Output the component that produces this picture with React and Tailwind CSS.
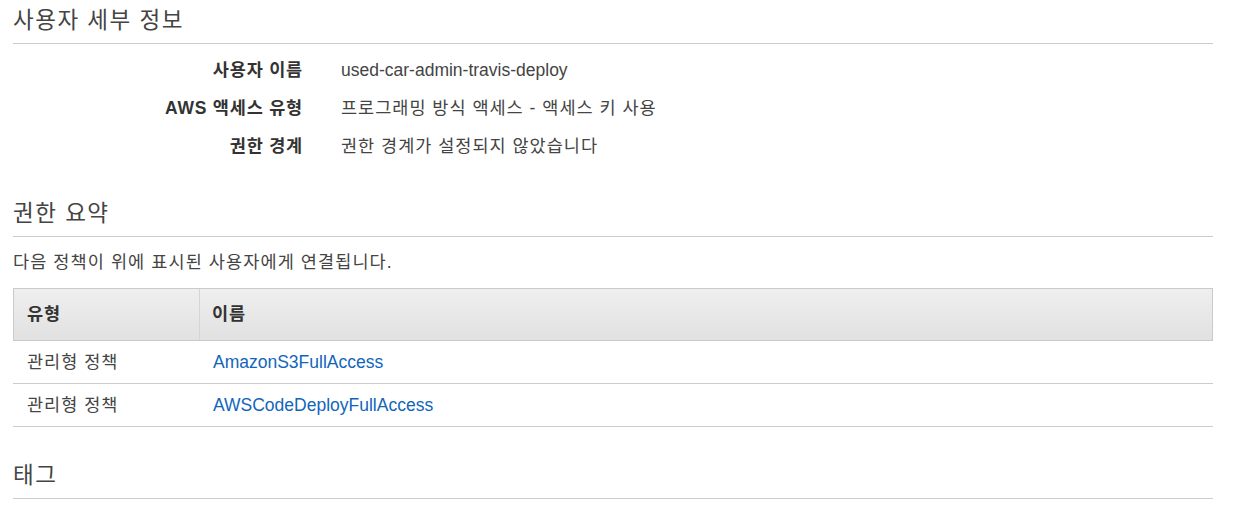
import React from "react";

const details = [
  { label: "사용자 이름", value: "used-car-admin-travis-deploy", latin: true },
  { label: "AWS 액세스 유형", value: "프로그래밍 방식 액세스 - 액세스 키 사용" },
  { label: "권한 경계", value: "권한 경계가 설정되지 않았습니다" },
];

const policies = [
  { type: "관리형 정책", name: "AmazonS3FullAccess" },
  { type: "관리형 정책", name: "AWSCodeDeployFullAccess" },
];

const SectionTitle = ({ children }) => (
  <h2 className="text-[22.5px] leading-[30px] pt-[6px] pb-[7px] border-b border-[#cccccc] text-[#444444] font-normal tracking-[1.5px]">
    {children}
  </h2>
);

export default function App() {
  return (
    <div
      className="w-[1237px] h-[509px] bg-white overflow-hidden text-[#444444] text-[17.5px]"
      style={{ fontFamily: '"Liberation Sans", "Noto Sans CJK KR", Arial, sans-serif' }}
    >
      <div className="ml-[13px] w-[1200px]">
        <SectionTitle>사용자 세부 정보</SectionTitle>

        {/* user details */}
        <div className="pt-[7px] grid grid-cols-[290px_1fr] gap-x-[38px]">
          {details.map((d) => (
            <React.Fragment key={d.label}>
              <div className="h-[38px] flex items-center justify-end font-bold text-[#333333] tracking-[0.8px]">
                {d.label}
              </div>
              <div className={`h-[38px] flex items-center ${d.latin ? "" : "tracking-[1px]"}`}>
                {d.value}
              </div>
            </React.Fragment>
          ))}
        </div>

        <div className="mt-[28px]">
          <SectionTitle>권한 요약</SectionTitle>
        </div>
        <p className="pt-[13px] leading-[24px] mb-[14px] tracking-[1.1px]">
          다음 정책이 위에 표시된 사용자에게 연결됩니다.
        </p>

        {/* policy table */}
        <div>
          <div className="flex h-[53px] border border-[#cacaca] bg-linear-to-b from-[#efefef] to-[#e1e1e1] font-bold text-[#333333] tracking-[1px]">
            <div className="w-[186px] pl-[13px] flex items-center border-r border-[#d5d5d5]">유형</div>
            <div className="flex-1 pl-[12px] flex items-center">이름</div>
          </div>
          {policies.map((p) => (
            <div key={p.name} className="flex h-[43px] border-b border-[#cccccc]">
              <div className="w-[187px] pl-[14px] flex items-center tracking-[1px]">{p.type}</div>
              <div className="flex-1 pl-[13px] flex items-center">
                <a href="#" className="text-[#1166bb]">{p.name}</a>
              </div>
            </div>
          ))}
        </div>

        <div className="mt-[28px]">
          <SectionTitle>태그</SectionTitle>
        </div>
      </div>
    </div>
  );
}
